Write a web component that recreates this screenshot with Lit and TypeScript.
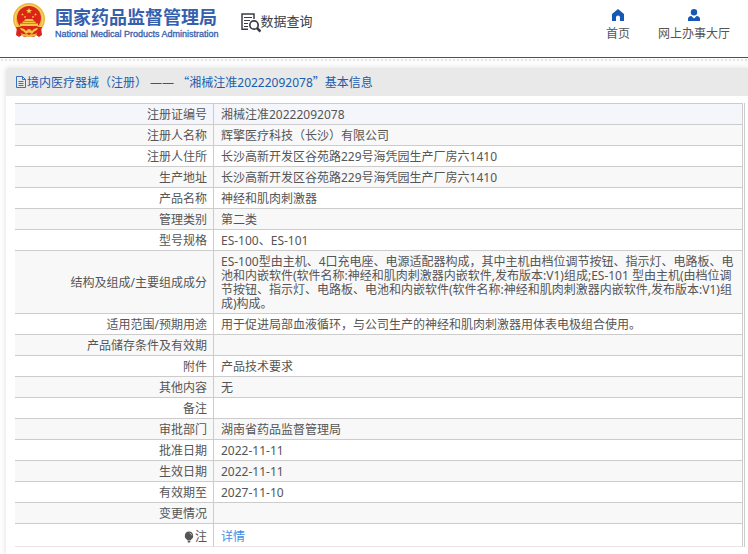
import { LitElement, html, css, svg, nothing } from "lit";
import { customElement } from "lit/decorators.js";

type Row = { label: string; value: string; note?: boolean };

const ROWS: Row[] = [
  { label: "注册证编号", value: "湘械注准20222092078" },
  { label: "注册人名称", value: "辉擎医疗科技（长沙）有限公司" },
  { label: "注册人住所", value: "长沙高新开发区谷苑路229号海凭园生产厂房六1410" },
  { label: "生产地址", value: "长沙高新开发区谷苑路229号海凭园生产厂房六1410" },
  { label: "产品名称", value: "神经和肌肉刺激器" },
  { label: "管理类别", value: "第二类" },
  { label: "型号规格", value: "ES-100、ES-101" },
  {
    label: "结构及组成/主要组成成分",
    value:
      "ES-100型由主机、4口充电座、电源适配器构成，其中主机由档位调节按钮、指示灯、电路板、电池和内嵌软件(软件名称:神经和肌肉刺激器内嵌软件,发布版本:V1)组成;ES-101 型由主机(由档位调节按钮、指示灯、电路板、电池和内嵌软件(软件名称:神经和肌肉刺激器内嵌软件,发布版本:V1)组成)构成。",
  },
  { label: "适用范围/预期用途", value: "用于促进局部血液循环，与公司生产的神经和肌肉刺激器用体表电极组合使用。" },
  { label: "产品储存条件及有效期", value: "" },
  { label: "附件", value: "产品技术要求" },
  { label: "其他内容", value: "无" },
  { label: "备注", value: "" },
  { label: "审批部门", value: "湖南省药品监督管理局" },
  { label: "批准日期", value: "2022-11-11" },
  { label: "生效日期", value: "2022-11-11" },
  { label: "有效期至", value: "2027-11-10" },
  { label: "变更情况", value: "" },
  { label: "注", value: "详情", note: true },
];

const star = (cx: number, cy: number, r: number) => {
  const pts = Array.from({ length: 10 }, (_, i) => {
    const a = -Math.PI / 2 + (i * Math.PI) / 5;
    const d = i % 2 ? r * 0.4 : r;
    return `${cx + d * Math.cos(a)},${cy + d * Math.sin(a)}`;
  }).join(" ");
  return svg`<polygon points=${pts} fill="#f9d34a" />`;
};

const emblem = html`<svg width="34" height="36" viewBox="0 0 34 36" aria-hidden="true">
  <path d="M5 24 L4 32 L7 34 L10 32 L12 34 L17 33 L22 34 L24 32 L27 34 L30 32 L29 24 Z" fill="#d8261c" />
  <circle cx="17" cy="16" r="16" fill="#eeb83c" />
  <circle cx="17" cy="16" r="14" fill="none" stroke="#f8d978" stroke-width="1" />
  <circle cx="17" cy="15" r="12" fill="#dc2419" />
  ${star(17, 8, 3.2)}${star(10.5, 11.5, 1.4)}${star(13, 14, 1.4)}${star(21, 14, 1.4)}${star(23.5, 11.5, 1.4)}
  <path d="M12 18 L13.5 16 H20.5 L22 18 Z M10.5 18.6 H23.5 V20 H10.5 Z M8 20.6 H26 V23 H8 Z" fill="#f5c544" />
  <path d="M4 24 H30 L27 32 H7 Z" fill="#d8261c" />
  <path d="M8 25 Q12 25 14 28 Q17 24 20 28 Q22 25 26 25 L25 27 Q22 28 20 31 Q17 28 14 31 Q12 28 9 27 Z" fill="#f5c544" />
  <path d="M9 30 Q12 32 15 31 L17 32 L19 31 Q22 32 25 30 L24 33 L17 34 L10 33 Z" fill="#eeb83c" />
</svg>`;

const searchIcon = html`<svg width="20" height="20" viewBox="0 0 20 20" fill="none" stroke="#3c3c44" aria-hidden="true">
  <path d="M7 16.2 H1 V1 H13 V6" stroke-width="1.5" />
  <path d="M3 4.5 H11 M3 7.5 H9 M3 10.5 H7 M3 13.5 H7" stroke-width="1.2" />
  <circle cx="13" cy="12" r="4.2" stroke-width="1.7" />
  <path d="M16 15 L19.5 18.5" stroke-width="2.6" />
</svg>`;

const homeIcon = html`<svg width="12" height="12" viewBox="0 0 12 12" aria-hidden="true">
  <path d="M6 0 L12 5 V12 H8 V8.6 A2 2 0 0 0 4 8.6 V12 H0 V5 Z" fill="#1659b5" />
</svg>`;

const userIcon = html`<svg width="12" height="12" viewBox="0 0 12 12" aria-hidden="true">
  <circle cx="6" cy="3.2" r="3.2" fill="#1659b5" />
  <path d="M0 12 V10 Q0 7.4 3.4 7 L6 9.4 L8.6 7 Q12 7.4 12 10 V12 Z" fill="#1659b5" />
</svg>`;

const docIcon = html`<svg width="10" height="12" viewBox="0 0 10 12" fill="none" stroke="#2464b8" aria-hidden="true">
  <path d="M0.5 0.5 H6.5 L9.5 3.5 V11.5 H0.5 Z M6.5 0.5 V3.5 H9.5 M2.5 5.5 H7.5 M2.5 7.5 H7.5 M2.5 9.5 H7.5" stroke-width="0.9" />
</svg>`;

const bulbIcon = html`<svg width="10" height="12" viewBox="0 0 10 12" aria-hidden="true">
  <path d="M5 0.5 A4.3 4.3 0 0 1 7.2 8.4 L6.8 9 H3.2 L2.8 8.4 A4.3 4.3 0 0 1 5 0.5 Z M3.4 9.6 H6.6 L6 11.5 H4 Z" fill="#555" />
  <path d="M5.6 2 Q7.4 2.4 7.8 4.4" fill="none" stroke="#ccc" stroke-width="0.8" />
</svg>`;

@customElement("app-root")
export class AppRoot extends LitElement {
  static styles = css`
    :host {
      display: block;
      min-height: 100vh;
      box-sizing: border-box;
      overflow: hidden;
      background: #fdfdfd;
      color: #555;
      font: 12px/14px "Noto Sans", "Noto Sans CJK SC", sans-serif;
    }
    a {
      color: inherit;
      text-decoration: none;
    }
    svg {
      display: block;
      flex: none;
    }
    .top {
      display: flex;
      align-items: flex-start;
      box-sizing: border-box;
      height: 58px;
      padding: 3px 18px 0 12px;
      background: #fff;
      border-bottom: 1px solid #1c5c92;
    }
    .brand {
      display: flex;
      gap: 9px;
      color: #3560ae;
    }
    .names {
      display: flex;
      flex-direction: column;
      white-space: nowrap;
    }
    .cn {
      font: bold 18px/26px "Noto Sans CJK SC", sans-serif;
    }
    .en {
      font: 9px/10px "Liberation Sans", sans-serif;
      -webkit-text-stroke: 0.3px;
    }
    .query {
      display: flex;
      align-items: flex-end;
      margin: 6px 0 0 22px;
      color: #3c3c44;
      font-size: 13px;
      line-height: 24px;
    }
    .links {
      display: flex;
      gap: 28px;
      margin-left: auto;
      padding-top: 6px;
    }
    .link {
      display: flex;
      flex-direction: column;
      align-items: center;
      gap: 5px;
      line-height: 16px;
    }
    .dots {
      height: 4px;
      background: radial-gradient(#dfe6e2 1px, transparent 1px) 0 0 / 4px 4px;
    }
    .panel {
      margin: 6px 0 0 6px;
      min-height: 486px;
      background: #fff;
      box-shadow: 0 0 5px #ddd;
      border-radius: 3px 0 0 0;
    }
    .title {
      display: flex;
      align-items: center;
      gap: 1px;
      height: 28px;
      margin: 0 0 7px;
      padding-left: 10px;
      background: #e9e9e9;
      border-radius: 3px 0 0 0;
      color: #1b5cae;
      font-size: 12px;
      font-weight: normal;
    }
    .wide {
      font-family: "Noto Sans CJK SC", sans-serif;
    }
    .frame {
      margin: 0 3px 0 9px;
      padding-right: 1px;
      border-right: 1px solid #ccc;
    }
    table {
      width: 100%;
      table-layout: fixed;
      border-spacing: 0;
      border-top: 1px solid #ccc;
      border-right: 1px solid #ccc;
    }
    .key {
      width: 199px;
    }
    th,
    td {
      box-sizing: border-box;
      height: 21px;
      padding: 4px 6px 2px 7px;
      border-bottom: 1px solid #ccc;
      font-weight: normal;
      text-align: left;
      vertical-align: middle;
    }
    th {
      border-right: 1px solid #ccc;
      text-align: right;
    }
    tr:nth-child(even) {
      background: #f8f8f8;
    }
    tr:first-child {
      background: #f5f6fb;
    }
    tr:last-child th,
    tr:last-child td {
      padding-top: 6px;
      border-bottom-color: #e6e6e6;
    }
    .note {
      display: flex;
      justify-content: flex-end;
      align-items: center;
      gap: 1px;
    }
    .detail {
      color: #3e8ee6;
    }
  `;

  render() {
    return html`
      <header class="top">
        <a class="brand" href="#">
          ${emblem}
          <span class="names">
            <span class="cn">国家药品监督管理局</span>
            <span class="en">National Medical Products Administration</span>
          </span>
        </a>
        <a class="query" href="#">${searchIcon}<span>数据查询</span></a>
        <nav class="links">
          <a class="link" href="#">${homeIcon}<span>首页</span></a>
          <a class="link" href="#">${userIcon}<span>网上办事大厅</span></a>
        </nav>
      </header>
      <div class="dots"></div>
      <main class="panel">
        <h1 class="title">
          ${docIcon}
          <span>境内医疗器械（注册） —— <span class="wide">“</span>湘械注准20222092078<span class="wide">”</span>基本信息</span>
        </h1>
        <div class="frame">
          <table>
            <colgroup><col class="key" /><col /></colgroup>
            <tbody>
              ${ROWS.map(
                (r) => html`<tr>
                  <th scope="row">
                    ${r.note ? html`<span class="note">${bulbIcon}${r.label}</span>` : r.label}
                  </th>
                  <td>${r.note ? html`<a class="detail" href="#">${r.value}</a>` : r.value || nothing}</td>
                </tr>`
              )}
            </tbody>
          </table>
        </div>
      </main>
    `;
  }
}
